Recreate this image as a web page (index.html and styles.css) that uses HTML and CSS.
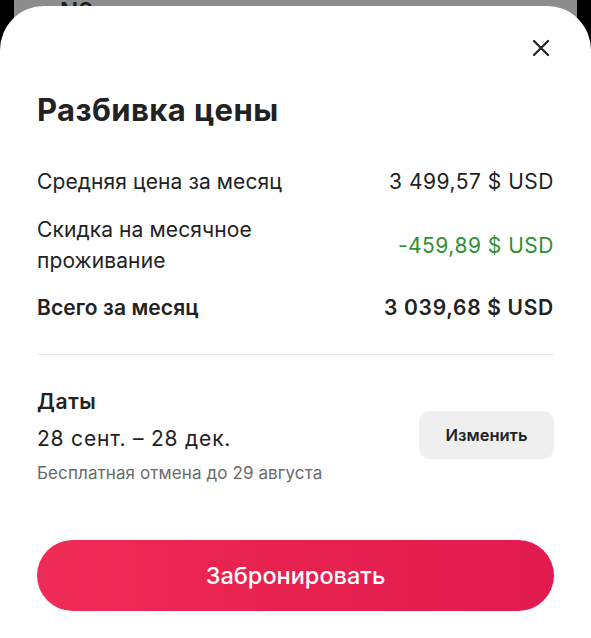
FILE: index.html
```html
<!DOCTYPE html>
<html lang="ru">
<head>
<meta charset="utf-8">
<link rel="stylesheet" href="styles.css">
</head>
<body>
<div class="screen">
  <div class="backdrop"><span class="backdrop-text">N9</span></div>
  <div class="sheet">
    <div class="close-row">
      <button class="close" aria-label="Закрыть">
        <svg width="18" height="18" viewBox="0 0 18 18"><path d="M2 2 L16 16 M16 2 L2 16" stroke="#222" stroke-width="2.2" stroke-linecap="round" fill="none"/></svg>
      </button>
    </div>
    <h1 class="title">Разбивка цены</h1>
    <div class="row">
      <div class="label">Средняя цена за месяц</div>
      <div class="value">3 499,57 $ USD</div>
    </div>
    <div class="row row-2">
      <div class="label">Скидка на месячное<br>проживание</div>
      <div class="value green">-459,89 $ USD</div>
    </div>
    <div class="row row-3 total">
      <div class="label">Всего за месяц</div>
      <div class="value">3 039,68 $ USD</div>
    </div>
    <div class="divider"></div>
    <div class="dates">
      <div class="dates-info">
        <div class="dates-title">Даты</div>
        <div class="dates-range">28 сент. – 28 дек.</div>
        <div class="dates-note">Бесплатная отмена до 29 августа</div>
      </div>
      <button class="change">Изменить</button>
    </div>
    <button class="book">Забронировать</button>
  </div>
</div>
</body>
</html>
```
FILE: styles.css
```css
* { box-sizing: border-box; }
html, body { margin: 0; padding: 0; }
body {
  background: #000;
  font-family: Inter, "Noto Sans", "Liberation Sans", sans-serif;
  color: #222;
  width: 591px;
  height: 638px;
  overflow: hidden;
}
.screen { background: #000; height: 638px; }
.backdrop {
  margin: 0 14px 0 14px;
  height: 52px;
  background: #8d8d8d;
  padding-left: 46px;
  overflow: hidden;
}
.backdrop-text {
  display: block;
  font-size: 24px;
  font-weight: 600;
  line-height: 24px;
  color: #1d1d1d;
}
.sheet {
  position: relative;
  margin-top: -46px;
  background: #fff;
  border-radius: 44px 44px 0 0;
  height: 632px;
  padding: 26px 37px 0 37px;
}
.close-row { display: flex; justify-content: flex-end; height: 32px; }
.close {
  width: 32px; height: 32px;
  margin-right: -3px;
  border: 0; background: transparent; padding: 0;
  display: flex; align-items: center; justify-content: center;
}
.title {
  margin: 28px 0 38px 0;
  font-size: 31px;
  line-height: 36px;
  font-weight: 700;
  letter-spacing: 0.4px;
}
.row {
  display: flex;
  justify-content: space-between;
  align-items: center;
  font-size: 21px;
  line-height: 31px;
}
.label { letter-spacing: 0.1px; }
.value { letter-spacing: 0.5px; }
.row-2 { margin-top: 17px; }
.row-3 { margin-top: 16px; }
.total { font-weight: 600; }
.total .value { letter-spacing: 0.7px; }
.green { color: #2f8f35; }
.divider { height: 1px; background: #e8e8e8; margin-top: 31px; }
.dates {
  display: flex;
  justify-content: space-between;
  align-items: center;
  margin-top: 31px;
}
.dates-title { font-size: 21px; line-height: 31px; font-weight: 600; letter-spacing: 0.6px; }
.dates-range { font-size: 21px; line-height: 31px; margin-top: 6px; letter-spacing: 0.8px; }
.dates-note { font-size: 17px; line-height: 22px; margin-top: 8px; color: #6a6a6a; letter-spacing: 0.1px; }
.change {
  width: 135px; height: 48px;
  border: 0; border-radius: 11px;
  background: #efefef;
  font-family: inherit;
  font-size: 16.5px; font-weight: 600;
  color: #222;
}
.book {
  display: block;
  width: 100%;
  height: 71px;
  margin-top: 56px;
  border: 0;
  border-radius: 36px;
  background: linear-gradient(to right, #ef2c57 0%, #e8224f 45%, #e11b50 100%);
  color: #fff;
  font-family: inherit;
  font-size: 23.5px;
  font-weight: 500;
}
```
